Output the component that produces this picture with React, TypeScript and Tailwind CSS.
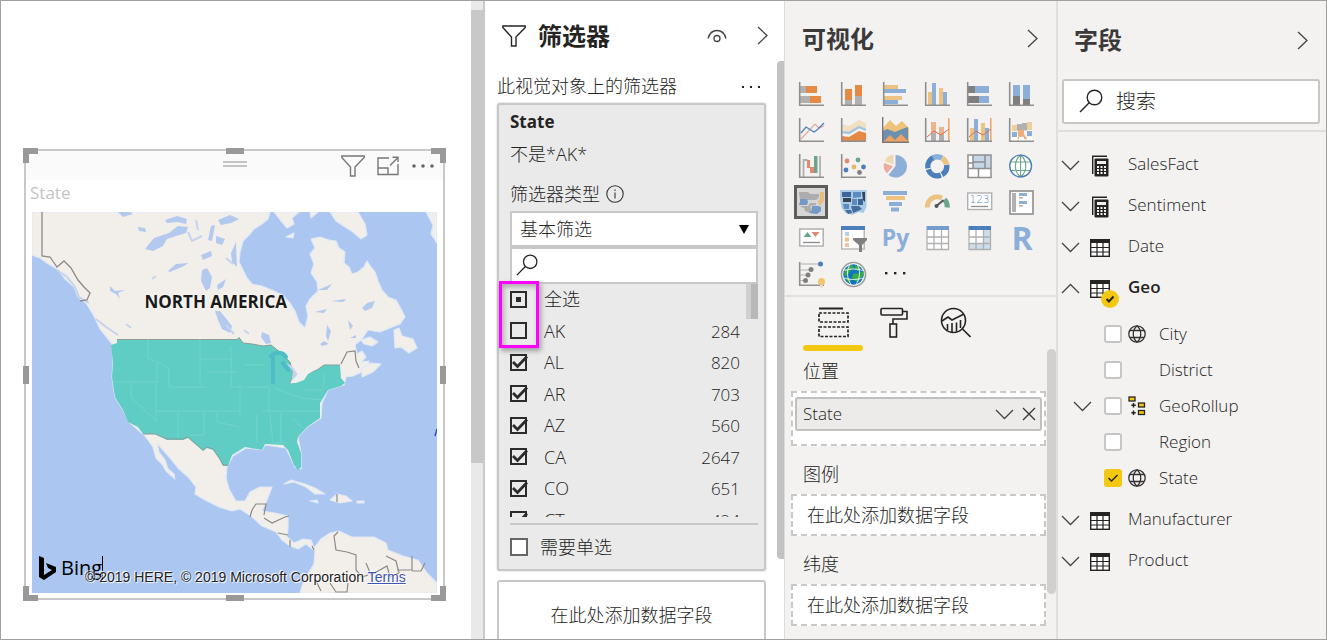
import React, { useState } from "react";

const AXIS = "#8f8f8f";
const ORANGE = "#e58a45";
const YELLOW = "#ecc383";
const BLUE = "#8bafd6";
const NAVY = "#4a7fba";
const RED = "#e08872";
const GREEN = "#6aa58c";
const GRAY = "#b0b0b0";
const DARK = "#7f7f7f";

type Box = [number, number, number, number, string];

function Rects({ items }: { items: Box[] }) {
  return (
    <>
      {items.map(([x, y, w, h, fill], i) => (
        <rect key={i} x={x} y={y} width={w} height={h} fill={fill} />
      ))}
    </>
  );
}

const axis = <path d="M1.7 1v23.3H26" fill="none" stroke={AXIS} strokeWidth="1.6" />;

const visuals: { name: string; art: React.ReactNode }[] = [
  {
    name: "堆积条形图",
    art: <><Rects items={[[2, 5, 6, 7, GRAY], [8, 5, 11, 7, ORANGE], [2, 15, 10, 7, GRAY], [12, 15, 11, 7, ORANGE]]} />{axis}</>,
  },
  {
    name: "堆积柱形图",
    art: <><Rects items={[[5, 8, 7, 11, ORANGE], [5, 19, 7, 5, GRAY], [15, 4, 7, 11, ORANGE], [15, 15, 7, 9, GRAY]]} />{axis}</>,
  },
  {
    name: "簇状条形图",
    art: <><Rects items={[[2, 4, 14, 4, YELLOW], [2, 8, 22, 4, BLUE], [2, 15, 18, 4, YELLOW], [2, 19, 14, 4, BLUE]]} />{axis}</>,
  },
  {
    name: "簇状柱形图",
    art: <><Rects items={[[4, 11, 4, 13, YELLOW], [8, 2, 4, 22, BLUE], [15, 7, 4, 17, YELLOW], [19, 11, 4, 13, BLUE]]} />{axis}</>,
  },
  {
    name: "百分比堆积条形图",
    art: <><Rects items={[[2, 5, 7, 7, DARK], [9, 5, 14, 7, BLUE], [2, 15, 11, 7, DARK], [13, 15, 10, 7, BLUE]]} />{axis}</>,
  },
  {
    name: "百分比堆积柱形图",
    art: <><Rects items={[[5, 4, 7, 11, BLUE], [5, 15, 7, 9, DARK], [15, 4, 7, 14, BLUE], [15, 18, 7, 6, DARK]]} />{axis}</>,
  },
  {
    name: "折线图",
    art: <><path d="M3 22L17 7l4 4 5-2" fill="none" stroke="#e6a79b" strokeWidth="1.2" /><path d="M3 16l5-6 8 5 3-2 7-7" fill="none" stroke={NAVY} strokeWidth="1.3" />{axis}</>,
  },
  {
    name: "分区图",
    art: <><path d="M2 7l7 2 10-6 7 3v6l-7-3-10 6-7-2z" fill="#f2dfc0" /><path d="M2 15l7 1 10-6 7 3" fill="none" stroke="#a3c6d9" strokeWidth="2.4" /><path d="M2 19l7 1 10-6 7 2v8H2z" fill={ORANGE} />{axis}</>,
  },
  {
    name: "堆积面积图",
    art: <><path d="M1 11l7-8 6 6 6-5 7 7v14H1z" fill="#edc27a" /><path d="M1 14l4-2 8 3 7-3 6-2v14H1z" fill="#6d90ae" /><path d="M1 25l7-7 5 5 6-6 7 7v1z" fill="#f0a263" /><path d="M.7 0v25.3H27" fill="none" stroke="#777" strokeWidth="1.4" /></>,
  },
  {
    name: "折线和堆积柱形图",
    art: <><Rects items={[[7, 5, 5, 11, "#ecb48c"], [7, 16, 5, 8, GRAY], [15, 10, 5, 8, "#ecb48c"], [15, 18, 5, 6, GRAY], [24, 1, 1.6, 23, "#eba876"]]} /><path d="M3 20l7-6 7 4 8-6" fill="none" stroke="#df6a4e" strokeWidth="1" />{axis}</>,
  },
  {
    name: "折线和簇状柱形图",
    art: <><Rects items={[[4, 11, 4, 13, YELLOW], [8, 2, 4, 22, BLUE], [15, 6, 4, 18, YELLOW], [19, 11, 4, 13, BLUE], [24, 1, 1.6, 23, "#eba876"]]} /><path d="M3 20l7-6 7 4 8-6" fill="none" stroke="#df6a4e" strokeWidth="1" />{axis}</>,
  },
  {
    name: "功能区图表",
    art: <><path d="M9 8h3v6H9zM16 8h3v6h-3z" fill="#c9d9e6" /><path d="M9 22l5-8 5 8h-3l-2-3-2 3z" fill="#efad7c" /><Rects items={[[4, 8, 5, 6, "#eccf9c"], [4, 15, 5, 5, BLUE], [4, 20, 5, 4, "#fff"], [9, 7, 5, 6, GRAY], [14, 6, 5, 7, GRAY], [19, 5, 5, 8, "#eccf9c"], [10, 13, 6, 6, "#efad7c"], [19, 14, 5, 5, BLUE], [11, 20, 5, 4, "#fff"], [19, 20, 5, 4, "#fff"]]} />{axis}</>,
  },
  {
    name: "瀑布图",
    art: <><path d="M5.500 24V7h4M21 4h1v20" fill="none" stroke={GRAY} strokeWidth="1.800" /><Rects items={[[9, 7, 3, 8, RED], [12, 14, 4, 6, RED], [16, 3, 3.5, 17, GREEN]]} />{axis}</>,
  },
  {
    name: "散点图",
    art: <><circle cx="7" cy="8" r="2.4" fill={RED} /><circle cx="18" cy="7" r="2.4" fill={GREEN} /><circle cx="6" cy="17" r="2.4" fill={NAVY} /><circle cx="14" cy="14" r="2.4" fill="#e3b96c" /><circle cx="23.5" cy="14" r="2.4" fill={NAVY} /><circle cx="19.5" cy="19.5" r="2.4" fill={DARK} />{axis}</>,
  },
  {
    name: "饼图",
    art: <><path d="M13.5 13V2a11.3 11.3 0 1 1-7 20z" fill={BLUE} /><path d="M11.5 11.5V1.5A11 11 0 0 0 2.5 8z" fill="#edd9b1" /><path d="M11 13.3L2 10a11.4 11.4 0 0 0 3 10.5z" fill="#eaaba0" /></>,
  },
  {
    name: "圆环图",
    art: <g fill="none" strokeWidth="5.4"><circle cx="13.3" cy="13.3" r="9.5" pathLength="100" stroke={NAVY} strokeDasharray="19 2 26 2 22 29" transform="rotate(-8 13.3 13.3)" /><circle cx="13.3" cy="13.3" r="9.5" pathLength="100" stroke={BLUE} strokeDasharray="16 84" transform="rotate(-118 13.3 13.3)" /><circle cx="13.3" cy="13.3" r="9.5" pathLength="100" stroke={YELLOW} strokeDasharray="13 87" transform="rotate(-58 13.3 13.3)" /></g>,
  },
  {
    name: "树状图",
    art: <g><rect x="2" y="2" width="23" height="22.5" fill="#fff" /><rect x="7" y="2" width="17.5" height="13" fill="#c5d6e8" /><path d="M2 2h23v22.5H2zM2 15.5h23M7 2v13M7 9h12M19 2v13M12.5 15.5v9M2 10h5" fill="none" stroke={AXIS} strokeWidth="1.5" /></g>,
  },
  {
    name: "地图",
    art: <g fill="none"><circle cx="12.6" cy="13" r="10.8" fill="#fff" /><path d="M12.6 2v22M2 9h21M2 17.5h21M12.6 2c-7 6-7 16 0 22M12.6 2c7 6 7 16 0 22" stroke={GREEN} strokeWidth="1.1" /><circle cx="12.6" cy="13" r="10.9" stroke={NAVY} strokeWidth="1.4" /></g>,
  },
  {
    name: "着色地图",
    art: <g><rect width="26" height="26" fill="#d6d6d6" /><path d="M1 3h9l2 2h9v3l-3 3H2zM2 17h8l2-3h6v2l-6 1 2 4-2 3-5-2-1-3-3-1z" fill="#adadad" /><path d="M2 10h7l1 3-1 3H1l1-3zM14 17h6l3 1v4l-4 3-8-1 3-3z" fill="#7399c9" /><path d="M22 3h4v9l-4 5-2-4 2-4z" fill="#e6bf7f" /></g>,
  },
  {
    name: "形状图",
    art: <g><path d="M0 1h26.500v17l-3 6-5-1-6 3-7-2-4-5L0 9z" fill="#a9cbe5" /><path d="M2 3h9v5H2zM18 10h5v6h-5z" fill="#3c6598" /><path d="M3 9h8v4H3zM22 3h3v10l-2-2z" fill="#3a4350" /><path d="M13 3h8v5l-8 1zM12 10h5v6h-5zM3 15h6v5H4z" fill="#5a8cc2" /><path d="M11 17h8l3 3-4 2-5 2zM5 21h6l1 3-4 1z" fill="#446c9e" /></g>,
  },
  {
    name: "漏斗图",
    art: <Rects items={[[1, 2, 24, 4, BLUE], [4, 7, 19, 4, YELLOW], [7, 13, 13, 4, BLUE], [9, 18.5, 8, 4, BLUE]]} />,
  },
  {
    name: "仪表",
    art: <g fill="none" strokeWidth="5"><path d="M3.500 18.500a9.800 9.800 0 0 1 14.500-9.500" stroke={YELLOW} /><path d="M20.500 10.500a9.800 9.800 0 0 1 2.700 8" stroke={GREEN} /><path d="M12.500 17L19.500 11" stroke="#555" strokeWidth="2" /><circle cx="12.500" cy="17" r="2" fill="#555" stroke="none" /></g>,
  },
  {
    name: "卡片图",
    art: <g><rect x="1.700" y="4" width="24" height="16.500" fill="#fff" stroke={GRAY} strokeWidth="1.400" /><text x="13.500" y="14" fontSize="10.500" textAnchor="middle" fill={NAVY} fontFamily="DejaVu Sans">123</text><path d="M5 17.500h17" stroke={AXIS} strokeWidth="1.300" /></g>,
  },
  {
    name: "多行卡",
    art: <g><rect x="2" y="2" width="23" height="23" fill="#fff" stroke="#999" strokeWidth="1.800" /><Rects items={[[4, 4, 4, 19, GRAY], [11, 4, 8, 3, BLUE], [11, 8, 4, 1.5, GRAY], [11, 12, 8, 3, BLUE], [11, 16, 4, 1.5, GRAY]]} /></g>,
  },
  {
    name: "KPI",
    art: <g><rect x="1.700" y="4" width="23.500" height="17" fill="#fff" stroke={GRAY} strokeWidth="1.500" /><path d="M5.500 12l4-5 4 5z" fill={GREEN} /><path d="M13.500 7h8l-4 5z" fill={RED} /><path d="M5 17.500h17" stroke={AXIS} strokeWidth="1.400" /></g>,
  },
  {
    name: "切片器",
    art: <g><rect x="1.700" y="2" width="22.500" height="22" fill="#fff" stroke={GRAY} strokeWidth="1.300" /><Rects items={[[1, 1, 24, 4, NAVY], [5, 7, 4, 4, "#b9cfe6"], [5, 12.5, 4, 4, "#ecc27d"], [5, 18, 4, 4, "#f0bfae"]]} /><path d="M13 13h14v2l-5 5v7h-3v-7l-6-5z" fill={DARK} /></g>,
  },
  {
    name: "Python 视觉对象",
    art: <text x="13.500" y="20.500" fontSize="23" fontWeight="700" textAnchor="middle" fill={BLUE} fontFamily="Open Sans">Py</text>,
  },
  {
    name: "表",
    art: <g><rect x="3" y="2" width="21.500" height="22.500" fill="#fff" /><path d="M3 5v19.500h21.500V5M3 12h21.500M3 18.500h21.500M10 5v19M17.500 5v19" fill="none" stroke={GRAY} strokeWidth="1.300" /><rect x="2.500" y="1" width="22.500" height="4" fill="#739dcd" /></g>,
  },
  {
    name: "矩阵",
    art: <g><rect x="3" y="2" width="21.500" height="22.500" fill="#fff" /><path d="M17.500 5h7v19H3v-5.500h14.500z" fill="#cdddec" /><path d="M3 5v19.500h21.500V5M3 12h21.500M3 18.500h21.500M10 5v19M17.500 5v19" fill="none" stroke={GRAY} strokeWidth="1.300" /><rect x="2.500" y="1" width="22.500" height="4" fill={NAVY} /></g>,
  },
  {
    name: "R 脚本视觉对象",
    art: <text x="14" y="25" fontSize="32" fontWeight="700" textAnchor="middle" fill={BLUE} fontFamily="Open Sans">R</text>,
  },
  {
    name: "关键影响者",
    art: <g>{axis}<path d="M2 3h19M2 9h10M2 14h7M2 19.500h4" stroke={GRAY} strokeWidth="1" /><circle cx="22.500" cy="3" r="2.500" fill={NAVY} /><circle cx="13" cy="8.500" r="2.500" fill={DARK} /><circle cx="10" cy="14" r="2.500" fill={DARK} /><circle cx="7.500" cy="19.500" r="2.500" fill={DARK} /><circle cx="23.500" cy="20.500" r="3.600" fill="#efc76e" /><rect x="22" y="24" width="3" height="2.500" fill="#e8ddc0" /></g>,
  },
  {
    name: "ArcGIS 地图",
    art: <g fill="none"><circle cx="13.500" cy="13.500" r="12" fill="#fff" stroke="#9b9b9b" strokeWidth="1.600" /><circle cx="13.500" cy="13.500" r="10.300" fill="#1273c4" /><path d="M5 9l6-5 3 2-3 3-3 5-4 1zM15 4l6 3-2 3-4-1zM13 13l5-1 4 3-4 6-3-1-3-3zM20 11l3.500-1v5l-2 1zM5 16l5 1 1 5-4-2z" fill="#38ad45" /><path d="M4.500 9.500c6-2 12-2 18 0M4 17c6 2 13 2 19 0M10 3.500c-4 6-3 14 1 20M17 3.500c4 6 3 14-1 20" stroke="#fff" strokeWidth=".8" /></g>,
  },
  {
    name: "更多视觉对象",
    art: <g fill="#252423"><rect x="3" y="11" width="2.400" height="2.400" /><rect x="12" y="11" width="2.400" height="2.400" /><rect x="21" y="11" width="2.400" height="2.400" /></g>,
  },
];

function Chevron({ dir }: { dir: "down" | "up" | "right" }) {
  const d = { down: "M1 5l8.500 8.500L18 5", up: "M1 14l8.500-8.500L18 14", right: "M5 1l9 8.500L5 18" }[dir];
  return (
    <svg className="size-[19px] shrink-0" viewBox="0 0 19 19" fill="none" stroke="#444" strokeWidth="1.300">
      <path d={d} />
    </svg>
  );
}

function Search({ className }: { className: string }) {
  return (
    <svg className={className} viewBox="0 0 24 24" fill="none" stroke="#252423" strokeWidth="1.400">
      <circle cx="15.500" cy="8.500" r="7.300" />
      <path d="M10.200 13.700L1 23" />
    </svg>
  );
}

function Funnel({ className }: { className: string }) {
  return (
    <svg className={className} viewBox="0 0 24 22" fill="none" stroke="currentColor" strokeWidth="1.400">
      <path d="M.8 1h22.400v1.500L14 12v9h-4.500v-9L.8 2.500z" />
    </svg>
  );
}

function Globe() {
  return (
    <svg className="size-[18px]" viewBox="0 0 18 18" fill="none" stroke="#333" strokeWidth="1.300">
      <circle cx="9" cy="9" r="8.200" />
      <path d="M2 5.500h14M2 12.500h14M9 .8c-5 4.500-5 12 0 16.400M9 .8c5 4.500 5 12 0 16.400" />
    </svg>
  );
}

function Hierarchy() {
  return (
    <svg className="h-5 w-[18px]" viewBox="0 0 18 20">
      <g fill="#f2c811" stroke="#252423" strokeWidth="1.300">
        <rect x="1" y="1" width="6" height="4" />
        <rect x="10.500" y="7" width="6" height="4" />
        <rect x="10.500" y="14.500" width="6" height="4" />
      </g>
      <path d="M5.500 7v4.500M3.300 9.300h4.500M5.500 14.500V19M3.300 16.800h4.500" stroke="#252423" strokeWidth="1.500" />
    </svg>
  );
}

function TableIcon({ kind }: { kind: "calc" | "table" }) {
  if (kind === "calc") {
    return (
      <svg className="h-[22px] w-5" viewBox="0 0 20 22">
        <path d="M2.700 19V1.200H17" fill="none" stroke="#252423" strokeWidth="1.400" />
        <rect x="4.500" y="3.500" width="14" height="18" rx="1" fill="#252423" />
        <rect x="7" y="6" width="9" height="3" fill="#f3f2f1" />
        <path d="M7 12h9M7 15h9M7 18h9" stroke="#f3f2f1" strokeWidth="1.800" strokeDasharray="2 1.500" />
      </svg>
    );
  }
  return (
    <svg className="h-[18px] w-5" viewBox="0 0 20 18">
      <rect x=".7" y=".7" width="18.600" height="16.600" fill="#fff" stroke="#252423" strokeWidth="1.400" />
      <path d="M0 0h20v4H0z" fill="#252423" />
      <path d="M1 8.500h18M1 13h18M7 4v13M13 4v13" stroke="#252423" strokeWidth="1.200" />
    </svg>
  );
}

function MapArt() {
  return (
    <svg className="block h-auto w-full" viewBox="32 212 405 381">
      <rect x="32" y="212" width="405" height="381" fill="#abc6f1" />
      <g fill="#f2efea" stroke="#dfe8f5" strokeWidth="1.200" strokeLinejoin="round">
        <path d="M32 212H270L268 219 262 224 254 229 250 234 243 241 240 252 239 262 243 270 247 278 252 284 262 286 274 291 282 295 290 303 295 311 299 322 305 328 308 316 306 306 310 299 318 291 317 282 311 273 314 264 310 254 315 248 311 239 320 237 329 240 336 241 339 248 345 252 344 263 349 267 352 274 358 272 364 267 367 261 371 267 375 272 378 281 382 290 388 297 396 300 400 307 405 317 400 324 390 328 380 332 368 330 362 339 355 345 357 354 362 351 366 357 361 362 369 361 368 367 362 372 353 376 346 377 344 385 328 390 322 403 321 418 307 427 298 437 301 453 301 469 295 467 286 448 265 445 262 450 246 448 233 456 227 467 226 478 229 489 236 501 245 501 250 492 260 487 272 487 267 500 262 511 275 513 288 516 288 528 287 537 294 543 303 539 311 540 314 548 321 539 330 533 339 531 352 537 374 537 386 543 388 550 403 556 418 560 427 573 437 583V593H300L304 580 314 564 315 551 306 544 298 549 290 546 282 540 276 532 262 526 251 516 240 509 232 511 219 507 205 500 195 494 196 487 188 477 178 468 170 458 163 450 157 443 159 452 165 460 168 469 174 474 175 479 166 471 162 464 156 458 153 447 145 436 129 422 123 410 115 397 112 377 113 363 112 344 100 329 94 316 86 303 78 297 74 287 65 279 57 269 47 263 40 258 32 255Z" />
        <path d="M274 212H299L292 218 294 224 287 228 282 222ZM310 212H318L311 218ZM330 212H358L365 224 367 235 361 239 353 232 345 227 336 221ZM426 212H437V243L431 234 433 225ZM394 330L399 328 402 336 413 339 417 348 409 353 401 347 395 348ZM362 368L371 363 381 364 373 372 362 377ZM361 340L370 337 378 342 372 346 364 344ZM286 237L294 233 293 238Z" />
        <path d="M284 484L291 480 305 484 315 488 325 494 315 494 306 487 294 482ZM330 500L337 494 346 496 352 501 340 503ZM310 501L317 500 318 503ZM357 501H364V503H357Z" />
      </g>
      <g fill="#b3c9ee">
        <path d="M145 249l9-11 15-5 9-7 10 1-2 6-10 3-9 3-4 7-10 5z" />
        <path d="M118 212h12l3 2-10 3zM138 227l7 1 1 4-7-1zM165 220l12-4 10 3-1 5-8-2-11 1zM168 271l8-7 12-1-4 3-14 6zM202 270l5-2 5 9-2 11-4 3-5-10zM217 285l9-6-3 8-5 3z" />
        <path d="M215 311h5l12 15-2 7-8-4-4-9zM208 240l3-14 4-1-3 16zM218 220l12-5 9 4-8 4-10 2zM216 236l9 3-3 6-6-2zM201 255l10-4 1 5-9 4zM236 242l-5 11 1 9 5 5z" />
        <path d="M110 286l5 5 10-1-7 3 2 6-4-5-6-3zM262 332l7 3 2 8-5 1-5-7zM315 312l12-3-3 4zM318 290l14-6-5 6zM331 301l15-2-3 3zM362 308l5-5 8-2-3 7-7 3zM327 325l4 6-3 10-2-5zM320 344l4-3 5 3-7 2zM348 320l5 6-3 4zM350 338l6-3v3z" />
      </g>
      <g fill="none" stroke="#c5d4ec" strokeWidth="2">
        <path d="M57 270l10 7 8 10 4 10 10 6M96 319l10 8 12 8" />
        <path d="M188 232l4 9 10-5M196 220l2 10M226 258l7 6M152 279l4-3M126 324l5 4M226 325l8 9M244 330l5 4" />
      </g>
      <path d="M42 212V256L50 257 57 267 64 261 71 268 78 280 84 287 90 293 87 300 80 301" fill="none" stroke="#8e8a86" strokeWidth="1.300" />
      <path d="M117 339.500H237L239 337.500 243 343 252 344 263 346 271 345 281 353 290 362 293 375 290 383 300 380 307 373 317 370 324 365H340L341 378 345 383 341 386 328 390 320 403 320 418 307 427 298 437 297 442 301 453 301 467 298 470 294 465 288 450 283 445 265 444 262 450 245 447 232 455 228 466H223L220 460 213 450 207 448 203 451 188 438 183 440H167L155 434 143 434 138 427 128 422 123 410 115 397 112 377 113 363 111 345 117 343Z" fill="#5fcdc4" />
      <path d="M117 339.500H237L239 337.500 243 343 252 344 263 346 271 345 281 353 290 362 293 375 290 383 300 380 307 373 317 370 324 365H340M143 434l12 0 12 5h16l5-2 15 13 4-3 6 2 7 10 3 6h5" fill="none" stroke="#8d9c98" strokeWidth="1" />
      <path d="M286 363l6 3 6 9-3 7-4 2 2-13z" fill="#c5d3ef" />
      <path d="M290 383l8-9 8-4 11-1-9 5-4 6-8 3z" fill="#f0f0ee" />
      <path d="M271 356c5-5 12-4 15 1M273 358v24M283 363l5 7" fill="none" stroke="#4cbdc4" strokeWidth="4" strokeLinecap="round" />
      <path d="M148 339v20l12 4 9 6v18M113 382h44V363M200 339v48M200 359h32M131 382v15l25 24v-39M169 387h38M156 411h84M178 411v27M204 411v24h-15M231 346v41h14M207 372h30M240 389v27M217 412v10l22 5M245 365h20M247 387h22v24M257 415v28M270 415l3 28M281 413v30M263 411h57M275 388l15 6 13 4 19 2M303 390h20M293 419l8 8M275 443h10M325 373l-2 15" fill="none" stroke="#76d6cd" strokeWidth=".8" />
      <g fill="none" stroke="#8d8986" strokeWidth="1.200">
        <path d="M341 364l6-12 8-1 1 10 3 7M250 517l2-7 4-6h10l-2 11M264 518l8 5 13-6 4-1M278 533l10 2M290 540v7M312 546l2 4M338 532l-4 4 2 14 11 2 9 3v15l6 7 6-2M366 563l5 12 16-9 3 11 9-4-3-12-10-5M412 556v14h-15M412 571h9l4-8M315 579l6 12M330 583l6 9h11l1-9M337 494v8" />
      </g>
      <path d="M435 436l2-7" stroke="#3355c0" strokeWidth="1.500" />
    </svg>
  );
}

const handles = [
  "left-0 top-0 h-[15px] w-1.5",
  "left-0 top-0 h-1.5 w-[15px]",
  "right-0 top-0 h-[15px] w-1.5",
  "right-0 top-0 h-1.5 w-[15px]",
  "bottom-0 left-0 h-[15px] w-1.5",
  "bottom-0 left-0 h-1.5 w-[15px]",
  "bottom-0 right-0 h-[15px] w-1.5",
  "bottom-0 right-0 h-1.5 w-[15px]",
  "top-0 left-1/2 h-1.5 w-[18px] -translate-x-1/2",
  "bottom-0 left-1/2 h-1.5 w-[18px] -translate-x-1/2",
  "left-0 top-1/2 h-[18px] w-1.5 -translate-y-1/2",
  "right-0 top-1/2 h-[18px] w-1.5 -translate-y-1/2",
];

function Canvas() {
  return (
    <main className="flex min-w-0 flex-1 bg-white">
      <div className="flex-1 pl-[22px] pr-[25px] pt-[147px]">
        <section className="relative p-px">
          {handles.map((h) => (
            <span key={h} className={`absolute z-10 bg-[#999] ${h}`} />
          ))}
          <div className="border-2 border-[#c8c8c8] px-1 pb-[5px]">
            <header className="relative -mx-1 flex h-[29px] items-center justify-end gap-3 bg-[#fafafa] pr-2 text-[#777]">
              <span className="absolute left-1/2 top-2.5 h-1.5 w-6 -translate-x-1/2 border-y-2 border-[#c4c4c4]" />
              <button aria-label="筛选器"><Funnel className="h-[22px] w-6" /></button>
              <button aria-label="焦点模式">
                <svg className="h-5 w-[22px]" viewBox="0 0 22 20" fill="none" stroke="currentColor" strokeWidth="1.400">
                  <path d="M12 2H1v16.500h20V8M1 12h10v6.500M13 9.500L21 1.500M15.500 1.200H21V6" />
                </svg>
              </button>
              <button aria-label="更多选项">
                <svg className="h-4 w-6" viewBox="0 0 24 16" fill="#666">
                  <circle cx="3" cy="8" r="1.800" /><circle cx="12" cy="8" r="1.800" /><circle cx="21" cy="8" r="1.800" />
                </svg>
              </button>
            </header>
            <h2 className="flex h-8 items-center pb-1.5 text-[17px] text-[#c4c4c4]">State</h2>
            <div className="relative mx-0.5">
              <MapArt />
              <span className="absolute left-1/2 top-[76px] ml-[-90px] whitespace-nowrap text-[17px] font-bold leading-7 text-[#1a1a1a] [text-shadow:0_0_3px_#fff]">NORTH AMERICA</span>
              <div className="absolute bottom-3 left-[6px] flex items-center gap-1 text-black">
                <svg className="h-[26px] w-[19px]" viewBox="0 0 19 26">
                  <path d="M1 1l5 2v17l8-5-4-2-2-5 10 4v5L6 25l-5-3z" fill="#000" />
                </svg>
                <span className="border-r border-black text-xl leading-6">Bing</span>
              </div>
              <p className="absolute bottom-2 left-[53px] whitespace-nowrap font-['Liberation_Sans',sans-serif] text-sm leading-4 text-[#222] [text-shadow:1px_1px_1px_#fff,-1px_-1px_1px_#fff]">
                © 2019 HERE, © 2019 Microsoft Corporation <a href="#terms" className="text-[#3d55b5] underline">Terms</a>
              </p>
            </div>
          </div>
        </section>
      </div>
      <div className="w-3 bg-[#e9e9e9] pt-[9px]">
        <div className="h-[453px] bg-[#c8c8c8]" />
      </div>
    </main>
  );
}

const states: { name: string; count?: number; state: "on" | "off" | "mixed" }[] = [
  { name: "全选", state: "mixed" },
  { name: "AK", count: 284, state: "off" },
  { name: "AL", count: 820, state: "on" },
  { name: "AR", count: 703, state: "on" },
  { name: "AZ", count: 560, state: "on" },
  { name: "CA", count: 2647, state: "on" },
  { name: "CO", count: 651, state: "on" },
  { name: "CT", count: 424, state: "on" },
];

function StateRow({ name, count, state }: { name: string; count?: number; state: "on" | "off" | "mixed" }) {
  const [on, setOn] = useState(state === "on");
  return (
    <label className="flex items-center pr-[18px]">
      <span className="relative mr-4 size-[18px]">
        <input type="checkbox" checked={on} onChange={(e) => setOn(e.target.checked)} className="block size-[17px] appearance-none border-2 border-[#2b2b2b]" />
        {on && (
          <svg className="pointer-events-none absolute left-0 top-0 size-[18px]" viewBox="0 0 18 18" fill="none" stroke="#2b2b2b" strokeWidth="2.800">
            <path d="M3 8l4.500 4.500L17 2.500" />
          </svg>
        )}
        {state === "mixed" && <span className="absolute left-1.5 top-1.5 size-[5px] bg-[#2b2b2b]" />}
      </span>
      <span className="flex-1">{name}</span>
      {count !== undefined && <span className="text-[17px]">{count}</span>}
    </label>
  );
}

function Filters() {
  return (
    <aside className="relative flex w-[301px] shrink-0 flex-col overflow-hidden border-l-2 border-[#c8c8c8] bg-white pl-3 pr-[18px] text-[18px] font-light text-[#252423]">
      <header className="flex h-[69px] shrink-0 items-center pl-[5px]">
        <Funnel className="h-[22px] w-6" />
        <h2 className="ml-3 flex-1 text-2xl font-bold">筛选器</h2>
        <button aria-label="显示" className="mr-[26px]">
          <svg className="h-3.5 w-5" viewBox="0 0 20 14" fill="none" stroke="#444" strokeWidth="1.300">
            <path d="M1 9.500C2.500 4 6 1.500 10 1.500S17.500 4 19 9.500" /><circle cx="10" cy="9.500" r="3" />
          </svg>
        </button>
        <button aria-label="折叠" className="-mr-1.5"><Chevron dir="right" /></button>
      </header>
      <div className="flex h-[33px] shrink-0 items-center justify-between">
        <h3>此视觉对象上的筛选器</h3>
        <button aria-label="更多" className="flex gap-1.5 pr-1.5 text-[#252423]">
          <i className="size-0.5 bg-current" /><i className="size-0.5 bg-current" /><i className="size-0.5 bg-current" />
        </button>
      </div>
      <section className="shrink-0 rounded-[3px] border-2 border-[#c8c8c8] bg-[#eaeaea] pl-[11px] pr-1.5 shadow-[0_0_2px_#bbb]">
        <h3 className="flex h-[34px] items-center text-[17px] font-bold">State</h3>
        <p className="flex h-[30px] items-center">不是*AK*</p>
        <div className="mt-2 flex h-[34px] items-center gap-1.5">
          <label htmlFor="filter-kind">筛选器类型</label>
          <svg className="size-[18px]" viewBox="0 0 18 18" fill="none" stroke="#333" strokeWidth="1.100">
            <circle cx="9" cy="9" r="8.200" /><path d="M9 7.500v6M9 4.500v1.500" />
          </svg>
        </div>
        <div className="relative">
          <select id="filter-kind" className="block h-9 w-full appearance-none border-2 border-[#c8c8c8] bg-white pl-2 font-light">
            <option>基本筛选</option>
          </select>
          <svg className="pointer-events-none absolute right-[9px] top-3.5 h-[9px] w-2.5" viewBox="0 0 10 9"><path d="M0 0h10L5 9z" fill="#000" /></svg>
        </div>
        <div className="relative">
          <input aria-label="搜索值" className="block h-[37px] w-full border-2 border-[#c8c8c8] bg-white pl-9" />
          <Search className="pointer-events-none absolute left-1.5 top-[7px] size-[22px]" />
        </div>
        <div className="relative">
          <div className="h-[233px] overflow-hidden">
            <div className="grid h-[252px] grid-rows-8">
              {states.map((s) => <StateRow key={s.name} {...s} />)}
            </div>
          </div>
          <div className="absolute right-0 top-0 h-[35px] w-3 border-l-[5px] border-[#cfcfcf] bg-[#b8b8b8]" />
          <div className="absolute -left-[11px] -top-[3px] h-[67px] w-10 border-3 border-[#ff00ff] shadow-[2px_3px_5px_#0005,inset_2px_3px_5px_#0004]" />
        </div>
        <label className="mt-1.5 flex h-[46px] items-center gap-3 border-t-2 border-[#c8c8c8]">
          <input type="checkbox" className="size-[18px] appearance-none border-2 border-[#666] bg-white" />
          需要单选
        </label>
      </section>
      <button className="mt-[9px] h-[70px] shrink-0 rounded-[3px] border-2 border-[#c8c8c8] font-light">在此处添加数据字段</button>
      <div className="absolute right-0 top-[60px] h-[498px] w-[7px] rounded-l bg-[#c2c2c2]" />
    </aside>
  );
}

const dashed = "border-2 border-dashed border-[#c8c8c8] bg-white";

function DropField({ label }: { label: string }) {
  return (
    <section className="mt-2">
      <h3 className="flex h-10 items-center pl-3">{label}</h3>
      <button className={`block h-[42px] w-full pl-3.5 text-left font-light ${dashed}`}>在此处添加数据字段</button>
    </section>
  );
}

function Visualizations() {
  return (
    <aside className="relative flex w-[272px] shrink-0 flex-col overflow-hidden border-l border-[#dcdcdc] bg-[#f3f2f1] text-[18px] font-light text-[#252423]">
      <header className="flex h-[75px] shrink-0 items-center pl-[17px] pr-3.5">
        <h2 className="flex-1 text-2xl font-bold text-[#3b3a39]">可视化</h2>
        <button aria-label="折叠"><Chevron dir="right" /></button>
      </header>
      <div className="grid grid-cols-6 pl-[5px] pr-3.5">
        {visuals.map(({ name, art }) => (
          <button
            key={name}
            aria-label={name}
            className={name === "着色地图" ? "m-auto flex size-[34px] items-center justify-center border-[3px] border-[#5f5d5b] bg-[#d6d6d6]" : "flex h-9 items-center justify-center"}
          >
            <svg className="size-[26px] shrink-0" viewBox="0 0 26 26" overflow="visible">{art}</svg>
          </button>
        ))}
      </div>
      <nav className="mt-[3px] flex h-14 shrink-0 gap-px border-t-2 border-[#e1dfdd] pl-[18px]">
        <button aria-label="字段" className="flex w-[60px] flex-col items-center justify-between pt-2.5">
          <svg className="size-[31px]" viewBox="0 0 31 31" fill="none" stroke="#252423">
            <path d="M1 1.500h24" strokeWidth="2" /><path d="M1 6h29v9H1zM1 20h29v9.500H1z" strokeWidth="1.700" strokeDasharray="3 1.500" />
          </svg>
          <span className="h-1.5 w-full rounded-full bg-[#f2c811]" />
        </button>
        <button aria-label="格式" className="flex w-[60px] flex-col items-center pt-2.5">
          <svg className="size-[31px]" viewBox="0 0 31 31" fill="none" stroke="#252423" strokeWidth="1.600">
            <rect x="2" y="1.500" width="21.500" height="6.500" rx="1" /><path d="M23.500 4.500H28V12H14v5" /><rect x="11" y="17" width="6.500" height="13" />
          </svg>
        </button>
        <button aria-label="分析" className="flex w-[60px] flex-col items-center pt-2.5">
          <svg className="size-[31px]" viewBox="0 0 31 31" fill="none" stroke="#252423" strokeWidth="1.600">
            <circle cx="13.500" cy="13.500" r="12" /><path d="M22 21.500l8.500 8.500M2 14l6-4 4 3 12-6M7.500 17v6M12 16v9M16.500 15.500v9M20.500 13v8" />
          </svg>
        </button>
      </nav>
      <div className="pl-1.5 pr-2.5">
        <section>
          <h3 className="flex h-10 items-center pl-3">位置</h3>
          <div className={`h-[55px] px-0.5 pt-1 ${dashed}`}>
            <div className="flex h-[34px] items-center gap-2 rounded-[3px] border-2 border-[#c0c0c0] bg-[#edebe9] pl-1.5 pr-1 text-[17px]">
              <span className="flex-1">State</span>
              <button aria-label="展开"><Chevron dir="down" /></button>
              <button aria-label="移除">
                <svg className="size-3.5" viewBox="0 0 14 14" stroke="#333" strokeWidth="1.300"><path d="M1 1l12 12M13 1L1 13" /></svg>
              </button>
            </div>
          </div>
        </section>
        <DropField label="图例" />
        <DropField label="纬度" />
      </div>
      <div className="absolute right-0 top-[348px] h-[245px] w-[9px] rounded-full bg-[#d2d0ce]" />
    </aside>
  );
}

function TableRow({ name, kind, open }: { name: string; kind: "calc" | "table"; open?: boolean }) {
  return (
    <button className={`flex h-[41px] w-full items-center pl-[3px] text-left ${open ? "font-semibold" : "font-light"}`}>
      <span className="pt-1"><Chevron dir={open ? "up" : "down"} /></span>
      <span className="relative ml-2.5 pt-1">
        <TableIcon kind={kind} />
        {open && (
          <svg className="absolute left-[11px] top-3.5 size-[18px]" viewBox="0 0 18 18">
            <circle cx="9" cy="9" r="9" fill="#f2c811" /><path d="M5.500 9l2.500 2.500 4.500-5" fill="none" stroke="#252423" strokeWidth="2" />
          </svg>
        )}
      </span>
      <span className="ml-[18px]">{name}</span>
    </button>
  );
}

const columns: { name: string; icon?: "globe" | "tree"; on?: boolean }[] = [
  { name: "City", icon: "globe" },
  { name: "District" },
  { name: "GeoRollup", icon: "tree" },
  { name: "Region" },
  { name: "State", icon: "globe", on: true },
];

function ColumnRow({ name, icon, on: initial = false }: { name: string; icon?: "globe" | "tree"; on?: boolean }) {
  const [on, setOn] = useState(initial);
  return (
    <label className="flex h-9 items-center">
      <span className="ml-[15px] mr-3 w-[19px]">{icon === "tree" && <Chevron dir="down" />}</span>
      <span className="relative size-[18px]">
        <input type="checkbox" checked={on} onChange={(e) => setOn(e.target.checked)} className="block size-[18px] appearance-none rounded-[3px] border-2 border-[#c8c6c4] bg-white checked:border-[#f2c811] checked:bg-[#f2c811]" />
        {on && (
          <svg className="pointer-events-none absolute left-0 top-0 size-[18px]" viewBox="0 0 18 18" fill="none" stroke="#252423" strokeWidth="1.400">
            <path d="M4.500 9l3 3 6-6" />
          </svg>
        )}
      </span>
      <span className="ml-1.5 mr-[13px] w-[18px]">{icon === "globe" ? <Globe /> : icon === "tree" ? <Hierarchy /> : null}</span>
      {name}
    </label>
  );
}

function Fields() {
  return (
    <aside className="flex w-[270px] shrink-0 flex-col border-l-2 border-[#e1dfdd] bg-[#f3f2f1] text-[17px] font-light text-[#252423]">
      <header className="flex h-[78px] items-center pl-4 pr-3.5">
        <h2 className="flex-1 text-2xl font-bold text-[#3b3a39]">字段</h2>
        <button aria-label="折叠"><Chevron dir="right" /></button>
      </header>
      <div className="border-b-2 border-[#e1dfdd] pb-1.5 pl-1 pr-1.5">
        <div className="relative">
          <input aria-label="搜索" placeholder="搜索" className="block h-[45px] w-full rounded-[3px] border-2 border-[#c8c6c4] bg-white pl-[52px] text-xl placeholder:text-[#252423]" />
          <Search className="pointer-events-none absolute left-[17px] top-2.5 size-6" />
        </div>
      </div>
      <div className="pt-[11px]">
        <TableRow name="SalesFact" kind="calc" />
        <TableRow name="Sentiment" kind="calc" />
        <TableRow name="Date" kind="table" />
        <TableRow name="Geo" kind="table" open />
        <div className="pb-0.5 pt-[9px]">
          {columns.map((c) => <ColumnRow key={c.name} {...c} />)}
        </div>
        <TableRow name="Manufacturer" kind="table" />
        <TableRow name="Product" kind="table" />
      </div>
    </aside>
  );
}

export default function App() {
  return (
    <div className="flex h-screen overflow-hidden border border-[#a0a0a0] font-['Open_Sans','Noto_Sans_CJK_SC',sans-serif]">
      <Canvas />
      <Filters />
      <Visualizations />
      <Fields />
    </div>
  );
}
